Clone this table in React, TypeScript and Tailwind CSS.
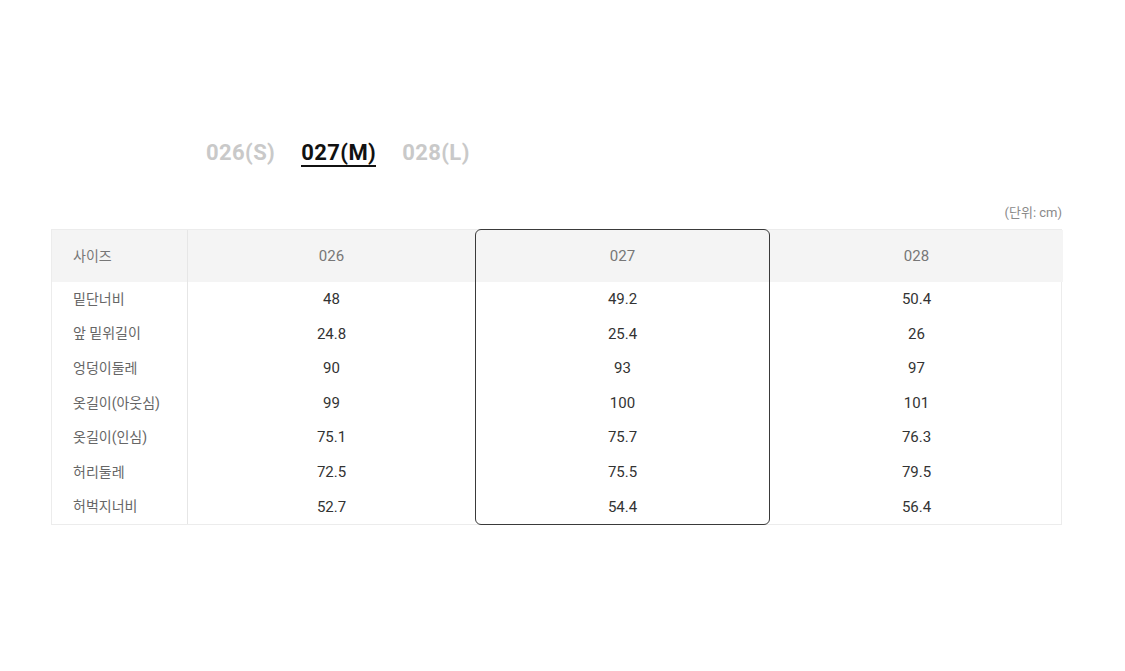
import React from "react";

const sizes = ["026", "027", "028"];

const rows: { label: string; values: string[] }[] = [
  { label: "밑단너비", values: ["48", "49.2", "50.4"] },
  { label: "앞 밑위길이", values: ["24.8", "25.4", "26"] },
  { label: "엉덩이둘레", values: ["90", "93", "97"] },
  { label: "옷길이(아웃심)", values: ["99", "100", "101"] },
  { label: "옷길이(인심)", values: ["75.1", "75.7", "76.3"] },
  { label: "허리둘레", values: ["72.5", "75.5", "79.5"] },
  { label: "허벅지너비", values: ["52.7", "54.4", "56.4"] },
];

const rowStarts = [
  "row-start-2",
  "row-start-3",
  "row-start-4",
  "row-start-5",
  "row-start-6",
  "row-start-7",
  "row-start-8",
];
const valueCols = ["col-start-2", "col-start-3", "col-start-4"];

const tabs = [
  { label: "026(S)", active: false },
  { label: "027(M)", active: true },
  { label: "028(L)", active: false },
];

export default function App() {
  return (
    <div
      className="w-[1125px] h-[671px] bg-white"
      style={{ fontFamily: 'Roboto, "Noto Sans CJK KR", sans-serif' }}
    >
      <div className="pt-[140px] px-[51px] w-[1113px]">
        {/* size tabs */}
        <div className="flex gap-[26px] pl-[155px]">
          {tabs.map((t) => (
            <div
              key={t.label}
              className={
                t.active
                  ? "text-[22px] leading-[25px] tracking-[0.4px] font-bold text-[#111] border-b-2 border-[#111]"
                  : "text-[22px] leading-[25px] tracking-[0.4px] font-bold text-[#c9c9c9] border-b-2 border-transparent"
              }
            >
              {t.label}
            </div>
          ))}
        </div>

        <div className="mt-[37px] flex justify-end text-[13px] leading-[18px] text-[#8a8a8a]">
          (단위: cm)
        </div>

        {/* size table */}
        <div className="mt-[7px] grid grid-cols-[136px_287px_295px_293px] border border-[#ececec]">
          <div className="col-start-1 row-start-1 h-[52px] bg-[#f4f4f4] border-r border-[#e6e6e6] flex items-center pl-[21px] text-[14px] text-[#777]">
            사이즈
          </div>
          {sizes.map((s, i) => (
            <div
              key={s}
              className={
                "row-start-1 h-[52px] bg-[#f4f4f4] flex items-center justify-center text-[15px] text-[#777] " +
                valueCols[i]
              }
            >
              {s}
            </div>
          ))}
          {rows.map((r, i) => (
            <React.Fragment key={r.label}>
              <div
                className={
                  "col-start-1 h-[34.6px] border-r border-[#e6e6e6] flex items-center pl-[21px] text-[14px] text-[#666] " +
                  rowStarts[i]
                }
              >
                {r.label}
              </div>
              {r.values.map((v, j) => (
                <div
                  key={j}
                  className={
                    "h-[34.6px] flex items-center justify-center text-[15px] text-[#333] " +
                    rowStarts[i] +
                    " " +
                    valueCols[j]
                  }
                >
                  {v}
                </div>
              ))}
            </React.Fragment>
          ))}
          {/* selected column outline */}
          <div className="col-start-3 row-start-1 row-span-8 -my-px border border-[#3a3a3a] rounded-[6px] pointer-events-none" />
        </div>
      </div>
    </div>
  );
}
